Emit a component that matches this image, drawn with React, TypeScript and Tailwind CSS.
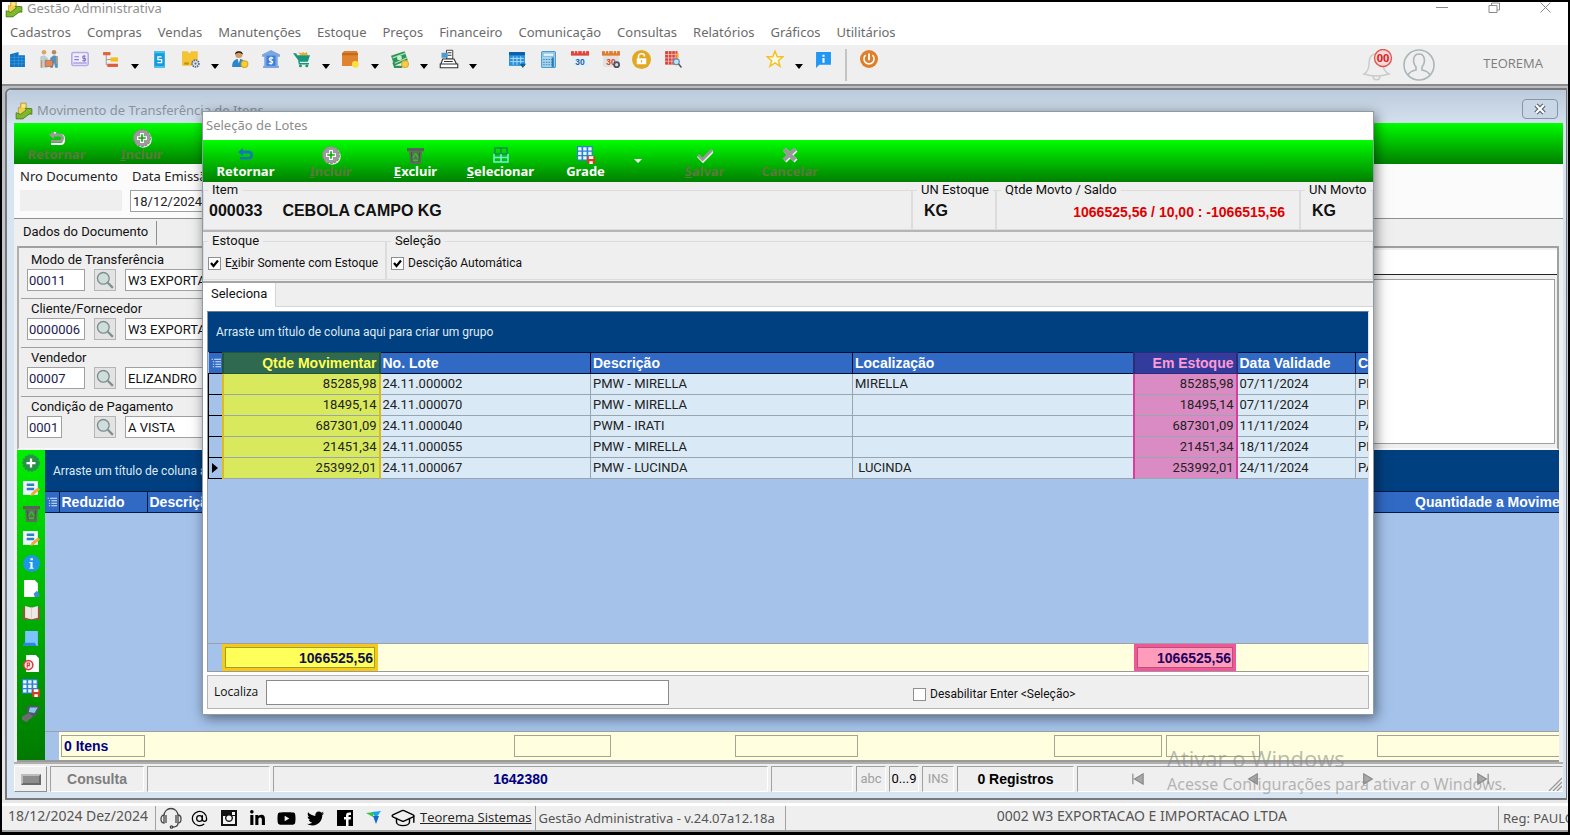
import { useId, type ReactNode } from "react";
import { AtSign, GraduationCap, Headphones } from "lucide-react";
import { FaLinkedinIn, FaTwitter, FaYoutube, FaFacebookSquare, FaInstagram } from "react-icons/fa";

function Svg({ children, size = "h-[17px] w-[17px]" }: { children: ReactNode; size?: string }) {
  return (
    <svg viewBox="0 0 16 16" className={`${size} shrink-0`} fill="none" aria-hidden="true">
      {children}
    </svg>
  );
}

const AppLogo = () => (
  <Svg size="h-[18px] w-[18px]">
    <path d="M5 1h5v5h4v5H3V5h2z" fill="#f0cf4e" stroke="#b18d1c" strokeWidth=".6" />
    <path d="M1 15V9.500L5 11l5-4-1-1.500 6 .5v5l-1.500-1L7 15z" fill="#7db82f" stroke="#3b7a10" strokeWidth=".7" />
    <path d="M6 2h3v3H6z" fill="#f9e690" />
  </Svg>
);

const BuildingIcon = () => (
  <Svg>
    <path d="M1 3l8-2v3h6v11H1z" fill="#0f74c4" />
    <path d="M1 6h14M1 9h14M1 12h14M5 3v12M9 4v11M12 4v11" stroke="#3d9de0" strokeWidth=".6" />
  </Svg>
);
const PeopleIcon = () => (
  <Svg size="h-5 w-5">
    <circle cx="4" cy="2.5" r="1.8" fill="#dba463" />
    <circle cx="12" cy="2.5" r="1.8" fill="#b98a5a" />
    <path d="M1 6l3-1 3 2v8H1z" fill="#b9cfd5" />
    <path d="M9 7l3-2 3 1v9h-2l-1-4-1 4H9z" fill="#4b95c6" />
    <path d="M2 9v6M14 6v6" stroke="#d08f57" />
    <path d="M5 9h6v5H5z" fill="#e08a5a" stroke="#a55b34" strokeWidth=".5" />
  </Svg>
);
const CardIcon = () => (
  <Svg size="h-[18px] w-[18px]">
    <rect x=".7" y="2.2" width="14.6" height="11.6" rx="1.5" fill="#f0edff" stroke="#b7abe6" strokeWidth="1.4" />
    <path d="M3 6h4M3 8.5h4M2 11.5h12" stroke="#8a7bd0" />
    <path d="M13 5.5h-2.5v2H13v2h-3M11.7 4.5v6" stroke="#7668c4" strokeWidth=".8" />
  </Svg>
);
const TreeIcon = () => (
  <Svg>
    <path d="M4 3v10h5M4 8h5" stroke="#9a9a9a" strokeWidth=".9" />
    <path d="M1 1h7v3H1z" fill="#e0643a" />
    <path d="M8 6h7v4H8z" fill="#f2bd1f" />
    <path d="M5 12h10v3H5z" fill="#df5b3c" />
  </Svg>
);
const BookSIcon = () => (
  <Svg>
    <path d="M3 0h10v16H3z" fill="#159ddb" />
    <path d="M3 0h10v2H3zM3 14h10v2H3z" fill="#49c2f0" />
    <path d="M10 5.5H6.5v2.7H10V11H6" stroke="#fff" strokeWidth="1.2" />
  </Svg>
);
const BoxGearIcon = () => (
  <Svg size="h-[18px] w-[18px]">
    <path d="M0 1h5l1.5 2L8 1h6v13H0z" fill="#f4c437" />
    <path d="M2 11h4v2H2z" fill="#c48d17" />
    <circle cx="12" cy="12" r="3" fill="#dfe6f2" stroke="#59688b" strokeWidth="1.6" strokeDasharray="1.3 .7" />
    <circle cx="12" cy="12" r="1" fill="#59688b" />
  </Svg>
);
const PersonCoinIcon = () => (
  <Svg size="h-[18px] w-[18px]">
    <circle cx="7" cy="4" r="3.2" fill="#d99a62" />
    <path d="M3.500 4C3 0 11 0 10.500 4 9 3 8 2 7 2.500 5 3 4.500 3 3.500 4z" fill="#222" />
    <path d="M1 15c0-6 3-7 6-7s6 1 6 7z" fill="#2a86c9" />
    <path d="M6 8h2l-1 4z" fill="#fff" />
    <circle cx="12" cy="12.500" r="3" fill="#f6cf3c" stroke="#dba514" />
  </Svg>
);
const BankIcon = () => (
  <Svg size="h-[18px] w-[18px]">
    <path d="M0 4l8-4 8 4v2H0zM1 14h14v2H1zM2 6h12v8H2z" fill="#7ba6e3" />
    <path d="M4 5h8v9H4z" fill="#3f7fd4" />
    <path d="M10 7.500C8 6 6 7 6.500 8.500S10 9.500 9.500 11 7 12.500 6 11.500M8 6v7" stroke="#fff" />
  </Svg>
);
const CartIcon = () => (
  <Svg>
    <path d="M5 1l2 3h7l-1-3-2 1-1-1-2 1z" fill="#f0a92d" />
    <path d="M0 2h3l1 2h12l-2 6H6z" fill="#17967a" />
    <path d="M5.500 9L6 12h9" stroke="#17967a" strokeWidth="1.300" />
    <circle cx="7" cy="14" r="1.400" fill="#17967a" />
    <circle cx="13" cy="14" r="1.400" fill="#17967a" />
  </Svg>
);
const BoxCoinIcon = () => (
  <Svg>
    <path d="M0 2l2-2h12l1 2v12H0z" fill="#e0832f" />
    <path d="M0 2h15v2H0z" fill="#c06a20" />
    <circle cx="12.500" cy="12.500" r="3.200" fill="#fbe03a" />
  </Svg>
);
const CashIcon = () => (
  <Svg size="h-[18px] w-[18px]">
    <path d="M0 5l12-4 3 8-12 5z" fill="#2f9458" />
    <path d="M1.500 7l11-4M3 12l11-5" stroke="#a9e0b5" />
    <circle cx="7.500" cy="7" r="2.200" fill="#c9f0cd" />
    <path d="M2 11l1.500 4H10" stroke="#2f9458" strokeWidth="1.800" />
    <circle cx="12.500" cy="12.500" r="3" fill="#f7cf45" stroke="#e0a92a" />
  </Svg>
);
const RegisterIcon = () => (
  <Svg size="h-5 w-5">
    <path d="M6 1h5v7H6z" fill="#fff" stroke="#444" strokeWidth=".800" />
    <path d="M2 3h5v4H2z" fill="#4f9bcf" />
    <path d="M3 8h9l2 4H1.500zM1 12h14v3H1z" fill="#fff" stroke="#333" strokeWidth=".900" />
    <path d="M4 10h7M7 3h3M7 5h3" stroke="#333" strokeWidth=".800" />
  </Svg>
);
const CalendarBlueIcon = () => (
  <Svg>
    <path d="M0 1h15v13H0z" fill="#2a92dc" />
    <path d="M0 1h15v3H0z" fill="#0d5fa8" />
    <path d="M1 7h13M1 10h13M4 5v8M7.500 5v8M11 5v8" stroke="#bfe2fa" strokeWidth=".800" />
    <path d="M10 12h6l-3 4z" fill="#0b6096" />
  </Svg>
);
const CalculatorIcon = () => (
  <Svg>
    <rect x="1.500" y=".500" width="13" height="15" rx="1" fill="#a9d4ee" stroke="#4a9acb" />
    <path d="M3 2h10v3H3z" fill="#e5f5ff" stroke="#4a9acb" strokeWidth=".500" />
    <path d="M3 8h10M3 10.500h10M3 13h10" stroke="#3b87ba" strokeDasharray="1.500 1" />
    <path d="M11 6h2v9h-2z" fill="#2c79af" />
  </Svg>
);
const Calendar30 = ({ gear = false }: { gear?: boolean }) => (
  <Svg size="h-[18px] w-[18px]">
    <path d="M1 1h14v14H1z" fill={gear ? "#e2e2e2" : "#e5f1f8"} />
    <path d="M0 1h16v4H0z" fill={gear ? "#e07b2d" : "#e34336"} />
    <path d="M3 0v3M6 0v3M10 0v3M13 0v3" stroke="#fff" strokeWidth=".700" />
    <text x="8" y="13" textAnchor="middle" fontSize="7.500" fontWeight="700" fontFamily="Liberation Sans" fill={gear ? "#d0492b" : "#1b62ac"}>
      30
    </text>
    {gear && <circle cx="13" cy="13" r="2.200" stroke="#4b5560" strokeWidth="1.600" fill="#d6dde3" />}
  </Svg>
);
const LockIcon = () => (
  <Svg size="h-[19px] w-[19px]">
    <circle cx="8" cy="8" r="8" fill="#e2a822" />
    <path d="M4 7h8v5H4z" fill="#fff" />
    <path d="M5.500 7V5c0-2.500 5-2.500 5 0v.500" stroke="#fff" strokeWidth="1.300" />
    <path d="M8 8.500v2" stroke="#e2a822" />
  </Svg>
);
const SheetSearchIcon = () => (
  <Svg size="h-[18px] w-[18px]">
    <path d="M1 1h11v12H1z" fill="#d8433a" />
    <path d="M1 4h11M1 7h11M1 10h11M4 1v12M7 1v12M10 1v12" stroke="#f5c4bf" strokeWidth=".700" />
    <path d="M11 3h2v4h-2z" fill="#f1b32d" />
    <circle cx="11" cy="10.500" r="2.600" fill="#bfe3f7" stroke="#5f8fb3" />
    <path d="M13 12.500l2.500 3" stroke="#555" strokeWidth="1.300" />
  </Svg>
);
const StarIcon = () => (
  <Svg size="h-[18px] w-[18px]">
    <path d="M8 1l2 5h5l-4 3.500 1.500 5L8 11.500 3.500 14.500 5 9.500 1 6h5z" fill="#fffbe5" stroke="#f3c224" strokeWidth="1.300" />
  </Svg>
);
const InfoBubbleIcon = () => (
  <Svg>
    <path d="M1 1h14v12H4l-3 3z" fill="#2196f3" />
    <path d="M7 3.500h2v1.800H7zM7 6.500h2V11H7z" fill="#fff" />
  </Svg>
);
const PowerIcon = () => (
  <Svg size="h-[18px] w-[18px]">
    <circle cx="8" cy="8" r="8" fill="#e07e29" />
    <path d="M5 4.500a4.500 4.500 0 1 0 6 0" stroke="#fff" strokeWidth="1.400" />
    <path d="M8 3v6" stroke="#fff" strokeWidth="1.600" />
  </Svg>
);

const ReturnIcon = ({ muted = false }: { muted?: boolean }) => (
  <Svg size="h-4 w-4">
    {muted && <path d="M6 2v3h6q3 0 3 4.500T12 14H2" stroke="#fff" strokeWidth="2.200" />}
    <path d="M0 5l5-4v2.500h5q5 0 5 4.500t-5 4.500H2v-2.500h8q2.500 0 2.500-2T10 6.500H5V9z" fill={muted ? "#9a9a9a" : "#1676b8"} />
  </Svg>
);
const AddIcon = () => (
  <Svg size="h-5 w-5">
    <circle cx="9" cy="9" r="6.800" fill="#e6f5e6" />
    <circle cx="8" cy="8" r="6.700" fill="#9b9b9b" stroke="#8a8a8a" strokeDasharray="2 1" />
    <path d="M8 4v8M4 8h8" stroke="#fff" strokeWidth="3" />
    <path d="M8 5v6M5 8h6" stroke="#12a312" strokeWidth="1.300" />
  </Svg>
);
const TrashIcon = () => (
  <Svg>
    <path d="M0 1h16v3H0z" fill="#5a5f57" />
    <path d="M2 4h12l-1 12H3z" fill="#5d6d58" />
    <path d="M8 6l3 5M8 6l-3 5M5 12.500h6" stroke="#2ec12e" strokeWidth="1.300" />
    <path d="M4 5l1 9M12 5l-1 9" stroke="#3a4c36" strokeWidth=".700" />
  </Svg>
);
const SelectGridIcon = () => (
  <Svg size="h-4 w-4">
    <path d="M2 1h12v6H2zM8 1v6" stroke="#178a50" strokeWidth="1.500" />
    <path d="M1 7v8h14V7M8 7v8M1 10.500h14" stroke="#77efe0" strokeWidth="1.500" />
  </Svg>
);
const GridSaveIcon = () => (
  <Svg size="h-[18px] w-[18px]">
    <path d="M0 0h14v13H0z" fill="#2b83cf" />
    <path d="M1 1h3v3H1zM5.500 1h3v3h-3zM10 1h3v3h-3zM1 5h3v3H1zM5.500 5h3v3h-3zM10 5h3v3h-3zM1 9h3v3H1zM5.500 9h3v3h-3z" fill="#e7f5ff" />
    <path d="M9 9h7v7H9z" fill="#cf3f22" />
    <path d="M10.500 9h4v2.500h-4zM11 13.500h3V16h-3z" fill="#fff" />
  </Svg>
);
const CheckGrayIcon = () => (
  <Svg size="h-4 w-4">
    <path d="M1 9l5 5L16 4" stroke="#fff" strokeWidth="3" />
    <path d="M1 8l4.500 4.500L15 3" stroke="#999" strokeWidth="3" />
  </Svg>
);
const CrossGrayIcon = () => (
  <Svg size="h-4 w-4">
    <path d="M3 3l11 11M14 3L3 14" stroke="#fff" strokeWidth="4" />
    <path d="M2 2l11 11M13 2L2 13" stroke="#999" strokeWidth="4" />
  </Svg>
);

const Magnifier = () => (
  <Svg size="h-[18px] w-[18px]">
    <circle cx="6.500" cy="6.500" r="5.200" fill="#cfdedd" stroke="#7f8f8f" strokeWidth="1.200" />
    <path d="M10.500 10.500l4.500 4.500" stroke="#7f8f8f" strokeWidth="2" />
  </Svg>
);

const SideAdd = () => (
  <Svg size="h-[18px] w-[18px]">
    <circle cx="8" cy="8" r="7" fill="#2a9048" stroke="#2a9048" strokeWidth="1.500" strokeDasharray="2 1" />
    <path d="M8 4v8M4 8h8" stroke="#fff" strokeWidth="2" />
  </Svg>
);
const EditIcon = () => (
  <Svg>
    <path d="M0 1h14v13H0z" fill="#eef6fc" />
    <path d="M3.500 4.500h7M3.500 8.500h7" stroke="#2f7fc0" strokeWidth="2.400" />
    <path d="M7 15l1-3 6-5 2 2-6 5z" fill="#f2a83a" />
  </Svg>
);
const InfoIcon = () => (
  <Svg>
    <circle cx="8" cy="8" r="8" fill="#1b97e5" />
    <path d="M7 3h2.300v2H7zM6 6.500h3V12h1v1H6v-1h1V7.500H6z" fill="#fff" />
  </Svg>
);
const PageIcon = () => (
  <Svg>
    <path d="M1 0h10l3 3v13H1z" fill="#fff" />
    <path d="M10 13l3-3 3 4-1 2h-4z" fill="#3a8fd6" />
  </Svg>
);
const BookIcon = () => (
  <Svg>
    <path d="M0 2h16v12H0z" fill="#8f5a3c" />
    <path d="M2 1l6 1.500L14 1v11l-6 1.500L2 12z" fill="#efe9e6" />
    <path d="M8 2v11" stroke="#cfc5c0" strokeWidth=".700" />
  </Svg>
);
const NoteIcon = () => (
  <Svg>
    <path d="M2 1h12v14H0l2-3z" fill="#7cc4ff" />
    <path d="M0 15l1-3h10l2 3z" fill="#2f86e0" />
  </Svg>
);
const PageAtIcon = () => (
  <Svg>
    <path d="M3 0h9l3 3v13H3z" fill="#fff" />
    <circle cx="5" cy="9.500" r="4.300" fill="#fbe5e5" stroke="#d63a3a" strokeWidth="1.400" />
    <path d="M4 12V7.500h2v2.500H4" stroke="#d63a3a" />
  </Svg>
);
const ScannerIcon = () => (
  <Svg size="h-[18px] w-[18px]">
    <path d="M5 1l11 1-4 9-8-2z" fill="#4b5a66" />
    <path d="M7 3h7l-3 5-5-1z" fill="#8ec5ea" />
    <path d="M0 11l6-3 4 3-6 5-4-2z" fill="#6a6c70" />
  </Svg>
);

const RowsGlyph = () => (
  <Svg size="h-3 w-2.5">
    <path d="M1 2h2M5 2h11M3 6h2M7 6h9M3 10h2M7 10h9M3 14h2M7 14h9" stroke="#dbe8fb" strokeWidth="1.600" />
  </Svg>
);

function ToolbarDrop({ label }: { label: string }) {
  return (
    <button aria-label={label} className="flex h-5 w-[18px] items-end justify-center">
      <svg viewBox="0 0 8 5" className="h-[5px] w-2" aria-hidden="true">
        <path d="M0 0h8L4 5z" fill="#000" />
      </svg>
    </button>
  );
}

function ToolbarIcon({ label, children }: { label: string; children: ReactNode }) {
  return (
    <button aria-label={label} className="flex h-5 w-[31px] items-center justify-center">
      {children}
    </button>
  );
}

function GreenButton({ icon, label, accel = false, disabled = false }: { icon: ReactNode; label: string; accel?: boolean; disabled?: boolean }) {
  return (
    <button
      disabled={disabled}
      className={`flex w-[85px] flex-col items-center pt-[5px] font-['Noto_Sans',sans-serif] text-[13px] leading-[13px] font-bold ${disabled ? "text-[#5b7a3c]" : "text-white"}`}
    >
      <span className="flex h-5 items-center">{icon}</span>
      <span>
        {accel ? (
          <>
            <span className="underline">{label[0]}</span>
            {label.slice(1)}
          </>
        ) : (
          label
        )}
      </span>
    </button>
  );
}

function Check({ label, accelIndex, checked = false, className = "" }: { label: string; accelIndex?: number; checked?: boolean; className?: string }) {
  const id = useId();
  return (
    <div className={`flex items-center gap-1 text-xs ${className}`}>
      <span className="grid">
        <input
          id={id}
          type="checkbox"
          defaultChecked={checked}
          className="peer col-start-1 row-start-1 h-[13px] w-[13px] appearance-none border border-[#8f8f8f] bg-white"
        />
        <svg viewBox="0 0 13 13" className="pointer-events-none col-start-1 row-start-1 hidden h-[13px] w-[13px] peer-checked:block" aria-hidden="true">
          <path d="M3 6l2.500 3L10 3.500" fill="none" stroke="#000" strokeWidth="2.200" />
        </svg>
      </span>
      <label htmlFor={id}>
        {accelIndex === undefined ? (
          label
        ) : (
          <>
            {label.slice(0, accelIndex)}
            <span className="underline">{label[accelIndex]}</span>
            {label.slice(accelIndex + 1)}
          </>
        )}
      </label>
    </div>
  );
}

function Group({ title, className, children }: { title: string; className: string; children: ReactNode }) {
  return (
    <fieldset className={`min-w-0 border border-[#dcdcdc] ${className}`}>
      <legend className="ml-1 px-1 leading-4 whitespace-nowrap">{title}</legend>
      {children}
    </fieldset>
  );
}

const menus = ["Cadastros", "Compras", "Vendas", "Manutenções", "Estoque", "Preços", "Financeiro", "Comunicação", "Consultas", "Relatórios", "Gráficos", "Utilitários"];

const fields = [
  { label: "Modo de Transferência", code: "00011", name: "W3 EXPORTACAO", wide: true },
  { label: "Cliente/Fornecedor", code: "0000006", name: "W3 EXPORTACAO", wide: true },
  { label: "Vendedor", code: "00007", name: "ELIZANDRO", wide: true },
  { label: "Condição de Pagamento", code: "0001", name: "A VISTA", wide: false },
];

const lots = [
  { qty: "85285,98", lot: "24.11.000002", desc: "PMW - MIRELLA", loc: "MIRELLA", date: "07/11/2024", c: "PMW" },
  { qty: "18495,14", lot: "24.11.000070", desc: "PMW - MIRELLA", loc: "", date: "07/11/2024", c: "PMW" },
  { qty: "687301,09", lot: "24.11.000040", desc: "PWM - IRATI", loc: "", date: "11/11/2024", c: "PARANA" },
  { qty: "21451,34", lot: "24.11.000055", desc: "PMW - MIRELLA", loc: "", date: "18/11/2024", c: "PMW" },
  { qty: "253992,01", lot: "24.11.000067", desc: "PMW - LUCINDA", loc: " LUCINDA", date: "24/11/2024", c: "PARANA" },
];

function MainHeader() {
  return (
    <header className="shrink-0 bg-white font-['Noto_Sans',sans-serif] text-[13px] text-[#6b6b6b]">
      <div className="flex h-[18px] items-start justify-between pr-4 pl-[3px]">
        <div className="flex h-3.5 items-center gap-1 text-[#8f8f8f]">
          <AppLogo />
          <span>Gestão Administrativa</span>
        </div>
        <div className="flex gap-10">
          {[
            ["Minimizar", "M0 5.500h12"],
            ["Restaurar", "M1 3.500h8v7H1zM3.500 3.500V1h8v7H9"],
            ["Fechar", "M.500.500l10 10M10.500.500l-10 10"],
          ].map(([label, d]) => (
            <button key={label} aria-label={label}>
              <svg viewBox="0 0 12 12" className="h-3 w-3" aria-hidden="true">
                <path d={d} fill="none" stroke="#8a8a8a" />
              </svg>
            </button>
          ))}
        </div>
      </div>
      <nav className="flex h-[25px] items-center gap-4 pl-2">
        {menus.map((m) => (
          <button key={m}>{m}</button>
        ))}
      </nav>
      <div className="flex h-[39px] items-start bg-[#efefef] pt-1">
        <ToolbarIcon label="Empresas"><BuildingIcon /></ToolbarIcon>
        <ToolbarIcon label="Clientes"><PeopleIcon /></ToolbarIcon>
        <ToolbarIcon label="Cartões"><CardIcon /></ToolbarIcon>
        <ToolbarIcon label="Estrutura"><TreeIcon /></ToolbarIcon>
        <ToolbarDrop label="Mais estrutura" />
        <ToolbarIcon label="Serviços"><BookSIcon /></ToolbarIcon>
        <ToolbarIcon label="Produtos"><BoxGearIcon /></ToolbarIcon>
        <ToolbarDrop label="Mais produtos" />
        <ToolbarIcon label="Vendedores"><PersonCoinIcon /></ToolbarIcon>
        <ToolbarIcon label="Bancos"><BankIcon /></ToolbarIcon>
        <ToolbarIcon label="Compras"><CartIcon /></ToolbarIcon>
        <ToolbarDrop label="Mais compras" />
        <ToolbarIcon label="Estoque"><BoxCoinIcon /></ToolbarIcon>
        <ToolbarDrop label="Mais estoque" />
        <ToolbarIcon label="Caixa"><CashIcon /></ToolbarIcon>
        <ToolbarDrop label="Mais caixa" />
        <ToolbarIcon label="Notas"><RegisterIcon /></ToolbarIcon>
        <ToolbarDrop label="Mais notas" />
        <div className="ml-5 flex">
          <ToolbarIcon label="Agenda"><CalendarBlueIcon /></ToolbarIcon>
          <ToolbarIcon label="Calculadora"><CalculatorIcon /></ToolbarIcon>
          <ToolbarIcon label="Calendário"><Calendar30 /></ToolbarIcon>
          <ToolbarIcon label="Configurar calendário"><Calendar30 gear /></ToolbarIcon>
          <ToolbarIcon label="Bloqueio"><LockIcon /></ToolbarIcon>
          <ToolbarIcon label="Consulta"><SheetSearchIcon /></ToolbarIcon>
        </div>
        <div className="ml-[71px] flex">
          <ToolbarIcon label="Favoritos"><StarIcon /></ToolbarIcon>
          <ToolbarDrop label="Mais favoritos" />
          <ToolbarIcon label="Mensagens"><InfoBubbleIcon /></ToolbarIcon>
        </div>
        <div className="mx-1.5 h-8 w-[2px] bg-[#c4c4c4]" />
        <ToolbarIcon label="Sair"><PowerIcon /></ToolbarIcon>
        <div className="ml-auto flex items-start pr-[25px]">
          <button aria-label="Notificações" className="mr-2">
            <svg viewBox="0 0 34 34" className="h-[34px] w-[34px]" fill="none" aria-hidden="true">
              <path d="M3 25q5-3 5-10c0-7 3-10 7-10s7 3 7 10q0 7 6 10-13 4-25 0zM12 27c0 5 7 5 7 0" stroke="#c9cccd" strokeWidth="1.500" />
              <circle cx="22" cy="9" r="8.500" fill="#f6dada" stroke="#e2574c" strokeWidth="1.400" />
              <text x="22" y="13" fontSize="11" fontWeight="700" fontFamily="Noto Sans" textAnchor="middle" fill="#d81f1f">00</text>
            </svg>
          </button>
          <button aria-label="Usuário">
            <svg viewBox="0 0 32 32" className="h-8 w-8" fill="none" stroke="#aab6ba" strokeWidth="1.600" aria-hidden="true">
              <circle cx="16" cy="16" r="15" />
              <path d="M5 26q2-4 8-5v-3c-4-5-3-13 3-13s7 8 3 13v3q6 1 8 5" />
            </svg>
          </button>
          <span className="ml-12 font-['Open_Sans',sans-serif] text-[13px] leading-7 text-[#7d7d7d]">TEOREMA</span>
        </div>
      </div>
    </header>
  );
}

function TransferForm() {
  return (
    <div className="flex shrink-0 flex-col bg-[#efefef]">
      <div className="flex h-[55px] gap-2 border-b border-[#8f8f8f] bg-[#fbfbfb] pl-1.5 font-['Noto_Sans',sans-serif] text-[13px] text-[#222]">
        <div className="flex w-[102px] flex-col gap-1 pt-0.5 leading-5">
          <label htmlFor="nro">Nro Documento</label>
          <input id="nro" readOnly className="h-[21px] w-full bg-[#efefef]" />
        </div>
        <div className="flex w-[160px] flex-col gap-1 pt-0.5 leading-5">
          <label htmlFor="emissao" className="pl-0.5">Data Emissão</label>
          <input id="emissao" defaultValue="18/12/2024" className="h-[22px] w-full border border-[#a0a0a0] bg-white px-0.5 font-['Roboto',sans-serif]" />
        </div>
      </div>
      <div className="flex h-[27px] items-center">
        <button className="h-6 border-r border-[#8f8f8f] pr-2 pb-0.5 pl-[9px]">Dados do Documento</button>
      </div>
      <div className="mr-1 ml-[3px] flex border-2 border-t-[#a0a0a0] border-r-[#a0a0a0] border-b-[#f8f8f8] border-l-[#b0b0b0] bg-[#efefef] py-0.5">
        <div className="w-[700px]">
          {fields.map((f, i) => (
            <div key={f.label} className="ml-0.5 h-[49px] border-b border-[#a0a0a0] pl-1.5 last:border-b-0">
              <label htmlFor={`field-${i}`} className="block pt-px pb-px pl-1 leading-[17px]">{f.label}</label>
              <div className="flex items-center">
                <span className="w-[67px] shrink-0">
                  <input
                    id={`field-${i}`}
                    defaultValue={f.code}
                    className={`h-[22px] border border-[#a0a0a0] bg-white px-px text-[13px] text-[#1b1b50] ${f.wide ? "w-[58px]" : "w-[35px]"}`}
                  />
                </span>
                <button aria-label={`Pesquisar ${f.label}`} className="mr-[9px] flex h-[22px] w-[22px] items-center justify-center border border-[#b5b5b5] bg-[#e3e3e3]">
                  <Magnifier />
                </button>
                <input aria-label={`${f.label} descrição`} defaultValue={f.name} className="h-[22px] flex-1 border border-[#a0a0a0] bg-white px-0.5" />
              </div>
            </div>
          ))}
        </div>
        <div className="flex flex-1 flex-col bg-[#efefef]">
          <div className="h-[25px] border-b border-[#222] bg-white" />
          <div className="mt-1 mr-0.5 mb-0.5 flex-1 border border-[#a0a0a0] bg-white" />
        </div>
      </div>
    </div>
  );
}

function ItemsGrid() {
  return (
    <div className="mr-1 ml-[3px] flex min-h-0 flex-1 border-b-2 border-[#9a9a9a]">
      <div className="flex w-7 shrink-0 flex-col items-center gap-[7px] bg-linear-to-b from-[#00f000] to-[#007a00] pt-1">
        {[
          ["Adicionar", <SideAdd />],
          ["Editar", <EditIcon />],
          ["Excluir", <TrashIcon />],
          ["Alterar", <EditIcon />],
          ["Informações", <InfoIcon />],
          ["Documento", <PageIcon />],
          ["Livro", <BookIcon />],
          ["Notas", <NoteIcon />],
          ["E-mail", <PageAtIcon />],
          ["Grade", <GridSaveIcon />],
          ["Coletor", <ScannerIcon />],
        ].map(([label, icon]) => (
          <button key={label as string} aria-label={label as string} className="flex h-[18px] w-[18px] items-center justify-center">
            {icon}
          </button>
        ))}
      </div>
      <div className="flex min-w-0 flex-1 flex-col overflow-hidden bg-[#a4c2ea]">
        <div className="flex h-[41px] shrink-0 items-center bg-[#004080] pl-2 text-xs text-[#dfeaf5]">Arraste um título de coluna aqui para criar um grupo</div>
        <table className="w-full shrink-0 table-fixed border-collapse">
          <colgroup>
            <col className="w-3.5" />
            <col className="w-[88px]" />
            <col />
            <col className="w-[144px]" />
          </colgroup>
          <thead>
            <tr className="h-[21px] border-y border-[#001a40] bg-[#316ac5] text-left font-['Liberation_Sans',sans-serif] text-sm leading-4 whitespace-nowrap text-white">
              <th className="border-r border-[#001a40] pl-0.5"><RowsGlyph /></th>
              <th className="border-r border-[#001a40] pl-0.5">Reduzido</th>
              <th className="pl-0.5">Descrição</th>
              <th className="overflow-hidden">Quantidade a Movimentar</th>
            </tr>
          </thead>
        </table>
        <div className="flex-1" />
        <div className="flex h-[29px] shrink-0 border-t border-[#a0a0a0]">
          <div className="w-3.5 shrink-0" />
          <div className="flex flex-1 items-center bg-[#ffffe0] pl-0.5">
            <div className="h-[22px] w-[84px] border border-[#a5a595] pl-0.5 font-['Liberation_Sans',sans-serif] text-sm leading-5 font-bold text-[#000080]">0 Itens</div>
            <div className="ml-auto h-[22px] w-[97px] border border-[#a5a595]" />
            <div className="ml-[124px] h-[22px] w-[123px] border border-[#a5a595]" />
            <div className="ml-[196px] h-[22px] w-[108px] border border-[#a5a595]" />
            <div className="ml-1 h-[22px] w-[94px] border border-[#a5a595]" />
            <div className="ml-[117px] h-[22px] w-[182px] border border-r-0 border-[#a5a595]" />
          </div>
        </div>
      </div>
    </div>
  );
}

const panel = "flex shrink-0 items-center justify-center border border-r-white border-b-white border-t-[#a0a0a0] border-l-[#a0a0a0]";

function RecordBar() {
  return (
    <div className="flex h-[30px] shrink-0 gap-[3px] border-t-2 border-[#b0b0b0] bg-[#efefef] pt-0.5 font-['Liberation_Sans',sans-serif] text-sm">
      <button aria-label="Teclado" className="flex w-[33px] items-center justify-center border border-t-white border-r-[#8f8f8f] border-b-[#8f8f8f] border-l-white">
        <span className="h-[11px] w-5 border-2 border-t-[#bdbdbd] border-r-[#6a6a6a] border-b-[#6a6a6a] border-l-[#bdbdbd] bg-[#8d8d8d]" />
      </button>
      <div className={`${panel} w-[94px] font-bold text-[#7d7d7d]`}>Consulta</div>
      <div className={`${panel} w-[123px]`} />
      <div className="flex min-w-0 flex-1 items-center justify-center border border-t-[#a0a0a0] border-r-white border-b-white border-l-[#a0a0a0] font-bold text-[#000080]">1642380</div>
      <div className={`${panel} w-[82px]`} />
      <div className={`${panel} w-[30px] font-['Roboto',sans-serif] text-[13px] text-[#a0a0a0]`}>abc</div>
      <div className={`${panel} w-[30px] font-['Roboto',sans-serif] text-[13px] text-black`}>0...9</div>
      <div className={`${panel} w-[32px] font-['Roboto',sans-serif] text-[13px] text-[#a0a0a0]`}>INS</div>
      <div className={`${panel} w-[117px] font-bold text-black`}>0 Registros</div>
      <div className="flex w-[486px] shrink-0 items-center border border-t-[#a0a0a0] border-r-[#efefef] border-b-white border-l-[#a0a0a0] pl-[53px]">
        <div className="flex flex-1 items-center justify-between">
          {[
            ["Primeiro", "M1 1v12M13 1v12L3 7z"],
            ["Anterior", "M12 1v12L2 7z"],
            ["Próximo", "M2 1v12l10-6z"],
            ["Último", "M13 1v12M1 1v12l10-6z"],
          ].map(([label, d]) => (
            <button key={label} aria-label={label}>
              <svg viewBox="0 0 14 14" className="h-3 w-3.5" aria-hidden="true">
                <path d={d} fill="#a8a8a8" stroke="#8a8a8a" strokeWidth="1.400" />
              </svg>
            </button>
          ))}
        </div>
        <svg viewBox="0 0 14 14" className="ml-[58px] h-3.5 w-3.5 self-end" aria-hidden="true">
          <path d="M1 14L14 1M5 14l9-9M9 14l5-5" stroke="#999" strokeWidth="1.300" />
        </svg>
      </div>
    </div>
  );
}

function TransferWindow() {
  return (
    <section className="mt-0.5 mr-px ml-[3px] flex min-h-0 flex-1 flex-col rounded-tl-md border-2 border-r border-[#77797f] bg-[#d7e4f2] pr-[3px] pb-[6px] pl-[7px]">
      <div className="-mr-[3px] -ml-[7px] flex h-[33px] shrink-0 items-center justify-between rounded-tl-md bg-linear-to-b from-[#bccbdb] to-[#d3e0ee] pt-2 pr-2 pl-2 font-['Noto_Sans',sans-serif]">
        <div className="flex items-center gap-1 text-[13px] text-[#8b929b]">
          <AppLogo />
          <span>Movimento de Transferência de Itens</span>
        </div>
        <button aria-label="Fechar janela" className="mb-1 flex h-5 w-9 items-center justify-center rounded-sm border border-[#8795ab] bg-[#c9d6e5]">
          <svg viewBox="0 0 14 12" className="h-3 w-3.5" aria-hidden="true">
            <path d="M3 2l8 8M11 2l-8 8" stroke="#55606e" strokeWidth="4.500" />
            <path d="M3 2l8 8M11 2l-8 8" stroke="#fff" strokeWidth="2.200" />
          </svg>
        </button>
      </div>
      <div className="flex min-h-0 flex-1 flex-col bg-[#efefef]">
        <div className="flex h-[41px] shrink-0 bg-linear-to-b from-[#00ff00] to-[#008000]">
          <GreenButton icon={<ReturnIcon muted />} label="Retornar" disabled />
          <GreenButton icon={<AddIcon />} label="Incluir" accel disabled />
        </div>
        <TransferForm />
        <ItemsGrid />
        <RecordBar />
      </div>
    </section>
  );
}

const yellowCell = "border-x-2 border-x-[#dcbc1c] bg-[#d9e95e] pr-0.5 text-right";
const pinkCell = "border-x-2 border-x-[#d5409f] bg-[#da8bc4] pr-0.5 text-right";

function LotsTable() {
  return (
    <table className="w-full shrink-0 table-fixed border-collapse whitespace-nowrap">
      <colgroup>
        <col className="w-3.5" />
        <col className="w-[157px]" />
        <col className="w-[211px]" />
        <col className="w-[262px]" />
        <col className="w-[281px]" />
        <col className="w-[103px]" />
        <col className="w-[119px]" />
        <col />
      </colgroup>
      <thead>
        <tr className="h-[21px] border-y border-[#001030] bg-[#316ac5] text-left font-['Liberation_Sans',sans-serif] text-sm leading-4 text-white">
          <th className="border-r border-[#001030] pl-0.5"><RowsGlyph /></th>
          <th className="border-2 border-y border-[#22563a] bg-[#2f694f] pr-0.5 text-right text-[#ffff55]">Qtde Movimentar</th>
          <th className="border-r border-[#001030] pl-0.5">No. Lote</th>
          <th className="border-r border-[#001030] pl-0.5">Descrição</th>
          <th className="border-r border-[#001030] pl-0.5">Localização</th>
          <th className="border-2 border-y border-[#2b2b78] bg-[#333c9c] pr-0.5 text-right text-[#ff9ad6]">Em Estoque</th>
          <th className="border-r border-[#001030] pl-0.5">Data Validade</th>
          <th className="overflow-hidden pl-0.5">Código</th>
        </tr>
      </thead>
      <tbody>
        {lots.map((l, i) => (
          <tr key={l.lot} className="h-[21px] border-b border-[#9aa5ae] bg-[#d9eaf6] leading-4 text-[#222]">
            <td className="border border-black bg-[#a4c2ea]">
              {i === 4 && (
                <svg viewBox="0 0 6 10" className="mx-auto h-2.5 w-1.5" aria-label="Linha atual">
                  <path d="M0 0v10l6-5z" fill="#000" />
                </svg>
              )}
            </td>
            <td className={yellowCell}>{l.qty}</td>
            <td className="border-r border-[#9aa5ae] pl-0.5">{l.lot}</td>
            <td className="border-r border-[#9aa5ae] pl-0.5">{l.desc}</td>
            <td className="pl-0.5 whitespace-pre">{l.loc}</td>
            <td className={pinkCell}>{l.qty}</td>
            <td className="border-r border-[#9aa5ae] pl-0.5">{l.date}</td>
            <td className="overflow-hidden pl-0.5">{l.c}</td>
          </tr>
        ))}
      </tbody>
    </table>
  );
}

function LotsDialog() {
  return (
    <section
      role="dialog"
      aria-label="Seleção de Lotes"
      className="absolute top-[109px] right-[194px] bottom-[117px] left-[200px] flex flex-col overflow-hidden border border-[#8f9aa6] bg-white shadow-[2px_3px_12px_rgba(0,0,0,0.5)]"
    >
      <h2 className="h-7 shrink-0 pl-[3px] font-['Noto_Sans',sans-serif] text-[13px] leading-[26px] text-[#8d8d8d]">Seleção de Lotes</h2>
      <div className="flex h-[42px] shrink-0 bg-linear-to-b from-[#00ff00] to-[#008000]">
        <GreenButton icon={<ReturnIcon />} label="Retornar" />
        <GreenButton icon={<AddIcon />} label="Incluir" accel disabled />
        <GreenButton icon={<TrashIcon />} label="Excluir" accel />
        <GreenButton icon={<SelectGridIcon />} label="Selecionar" accel />
        <GreenButton icon={<GridSaveIcon />} label="Grade" />
        <button aria-label="Opções da grade" className="mr-3.5 flex w-5 items-center justify-center">
          <svg viewBox="0 0 8 4" className="h-1 w-2" aria-hidden="true">
            <path d="M0 0h8L4 4z" fill="#fff" />
          </svg>
        </button>
        <GreenButton icon={<CheckGrayIcon />} label="Salvar" accel disabled />
        <GreenButton icon={<CrossGrayIcon />} label="Cancelar" disabled />
      </div>

      <div className="flex h-[50px] shrink-0 border-b-2 border-[#b5b5b5] bg-[#efefef]">
        <Group title="Item" className="flex-1">
          <div className="flex gap-5 pt-[3px] pl-[5px] font-['Liberation_Sans',sans-serif] text-base leading-5 font-bold">
            <span>000033</span>
            <span>CEBOLA CAMPO KG</span>
          </div>
        </Group>
        <Group title="UN Estoque" className="w-[84px]">
          <div className="pt-[3px] pl-[11px] font-['Liberation_Sans',sans-serif] text-base leading-5 font-bold">KG</div>
        </Group>
        <Group title="Qtde Movto / Saldo" className="w-[304px]">
          <div className="pt-1 pr-3.5 text-right font-['Liberation_Sans',sans-serif] text-sm leading-5 font-bold text-[#e00000]">1066525,56 / 10,00 : -1066515,56</div>
        </Group>
        <Group title="UN Movto" className="w-[73px]">
          <div className="pt-[3px] pl-[11px] font-['Liberation_Sans',sans-serif] text-base leading-5 font-bold">KG</div>
        </Group>
      </div>

      <div className="flex h-[51px] shrink-0 border-b-2 border-[#a5a5a5] bg-[#efefef] pt-px pb-px">
        <Group title="Estoque" className="w-[183px]">
          <Check label="Exibir Somente com Estoque" accelIndex={1} checked className="pt-1 pl-1 leading-5 whitespace-nowrap" />
        </Group>
        <Group title="Seleção" className="flex-1">
          <Check label="Descição Automática" checked className="pt-1 pl-1 leading-5" />
        </Group>
      </div>

      <div className="flex h-6 shrink-0 bg-[#efefef]">
        <button className="h-full border-r border-[#d5d5d5] bg-white px-2 pb-0.5">Seleciona</button>
        <div className="flex-1 border-b border-[#d5d5d5]" />
      </div>

      <div className="mx-1 mt-1 flex min-h-0 flex-1 flex-col border border-t-[#6a7f96] border-r-[#e3e3e3] border-b-[#9a9a9a] border-l-[#8f9aa6] bg-[#a4c2ea]">
        <div className="flex h-10 shrink-0 items-center bg-[#004080] pl-2 text-xs text-[#dfeaf5]">Arraste um título de coluna aqui para criar um grupo</div>
        <LotsTable />
        <div className="flex-1" />
        <div className="flex h-7 shrink-0 border-t border-[#a0a0a0]">
          <div className="w-3.5 shrink-0" />
          <div className="flex flex-1 bg-[#ffffe0] font-['Liberation_Sans',sans-serif] text-sm font-bold text-[#10104a]">
            <div className="w-[156px] border-3 border-[#f6c916] bg-[#ffff59]">
              <div className="h-full border border-[#a39a38] pr-px text-right leading-5">1066525,56</div>
            </div>
            <div className="ml-[756px] w-[102px] border-3 border-[#f5539b] bg-[#ff9cbb]">
              <div className="h-full border border-[#b0566f] pr-px text-right leading-5 text-[#200060]">1066525,56</div>
            </div>
          </div>
        </div>
      </div>

      <div className="mx-1 mt-[3px] mb-[5px] flex h-[34px] shrink-0 items-center border border-[#b5b5b5] bg-[#efefef] pl-1.5">
        <label htmlFor="localiza" className="w-[52px] font-['Open_Sans',sans-serif] text-xs">Localiza</label>
        <input id="localiza" className="h-[25px] w-[403px] border border-[#8a8a8a] bg-white px-1" />
        <Check label="Desabilitar Enter <Seleção>" className="ml-[244px] pt-1" />
      </div>
    </section>
  );
}

function AppFooter() {
  const social = "flex w-[29px] items-center justify-center text-black";
  return (
    <footer className="flex h-[26px] shrink-0 items-stretch overflow-hidden border-b-2 border-[#a0a0a0] bg-[#efefef] font-['Noto_Sans',sans-serif] text-[13px] whitespace-nowrap text-[#555]">
      <div className="w-[154px] border-r border-[#a0a0a0] pl-1.5 text-sm leading-5">18/12/2024 Dez/2024</div>
      <div className="flex">
        <a href="#suporte" aria-label="Suporte" className={social}>
          <svg viewBox="0 0 22 22" className="h-[22px] w-[22px]" fill="none" stroke="#444" strokeWidth="1.300" aria-hidden="true">
            <path d="M4 9c0-10 14-10 14 0M4 8c-4 0-4 8 0 8zM6 8v8M18 8c4 0 4 8 0 8zM16 8v8M18 16q0 4-5 4" />
            <circle cx="11.500" cy="20" r="1.200" />
          </svg>
        </a>
        <a href="#email" aria-label="E-mail" className={social}><AtSign size={17} strokeWidth={1.8} /></a>
        <a href="#instagram" aria-label="Instagram" className={social}>
          <svg viewBox="0 0 16 16" className="h-4 w-4" aria-hidden="true">
            <path d="M0 0h16v16H0z" fill="#111" />
            <path d="M2 6h2.500a4 4 0 1 0 7 0H14v8H2zM11 2h3v3h-3z" fill="#f4f4f4" />
            <circle cx="8" cy="8" r="2.600" fill="#f4f4f4" />
          </svg>
        </a>
        <a href="#linkedin" aria-label="LinkedIn" className={social}><FaLinkedinIn size={17} /></a>
        <a href="#youtube" aria-label="YouTube" className={social}><FaYoutube size={19} /></a>
        <a href="#twitter" aria-label="Twitter" className={social}><FaTwitter size={17} /></a>
        <a href="#facebook" aria-label="Facebook" className={social}>
          <svg viewBox="0 0 16 16" className="h-4 w-4" aria-hidden="true">
            <path d="M0 0h16v16H0z" fill="#000" />
            <path d="M9 16V9.500H7V7h2V5.500C9 3.500 10 2.500 12 2.500h2V5h-1.500c-.700 0-1 .300-1 1v1H14l-.300 2.500h-2.200V16z" fill="#fff" />
          </svg>
        </a>
        <a href="#teorema" aria-label="Teorema" className={social}>
          <Svg size="h-4 w-4">
            <path d="M0 3l8-1-1 5z" fill="#3bc43b" />
            <path d="M6 2l9-1-5 7z" fill="#13a8e8" />
            <path d="M7 6h6l-3 8z" fill="#1668c8" />
          </Svg>
        </a>
        <a href="#cursos" aria-label="Cursos" className={social}><GraduationCap size={26} strokeWidth={1.3} /></a>
      </div>
      <a href="#site" className="border-r border-[#a0a0a0] px-[3px] font-['Open_Sans',sans-serif] leading-[22px] text-[#222] underline">Teorema Sistemas</a>
      <div className="w-[250px] border-r border-[#a0a0a0] pl-[3px] leading-6">Gestão Administrativa - v.24.07a12.18a</div>
      <div className="flex-1 border-r border-[#a0a0a0] text-center text-sm leading-5">0002 W3 EXPORTACAO E IMPORTACAO LTDA</div>
      <div className="w-[69px] shrink-0 overflow-hidden pl-1 leading-6">Reg: PAULO</div>
    </footer>
  );
}

export default function App() {
  return (
    <div className="relative flex h-screen flex-col overflow-hidden border-2 border-b-3 border-black bg-[#efefef] font-['Roboto',sans-serif] text-[13px] text-[#111]">
      <MainHeader />
      <main className="flex min-h-0 flex-1 flex-col border-t-2 border-[#8a8a8a] bg-linear-to-b from-[#b9bcc1] to-[#e8e8e8] pb-[3px]">
        <TransferWindow />
      </main>
      <div className="h-[3px] shrink-0 bg-white" />
      <AppFooter />
      <LotsDialog />
      <div className="pointer-events-none absolute right-[56px] bottom-[36px] w-[345px] font-['Open_Sans',sans-serif] whitespace-nowrap text-[#8a8a8a]/60">
        <p className="text-[22px] leading-7">Ativar o Windows</p>
        <p className="font-['Noto_Sans',sans-serif] text-base leading-6">Acesse Configurações para ativar o Windows.</p>
      </div>
    </div>
  );
}
